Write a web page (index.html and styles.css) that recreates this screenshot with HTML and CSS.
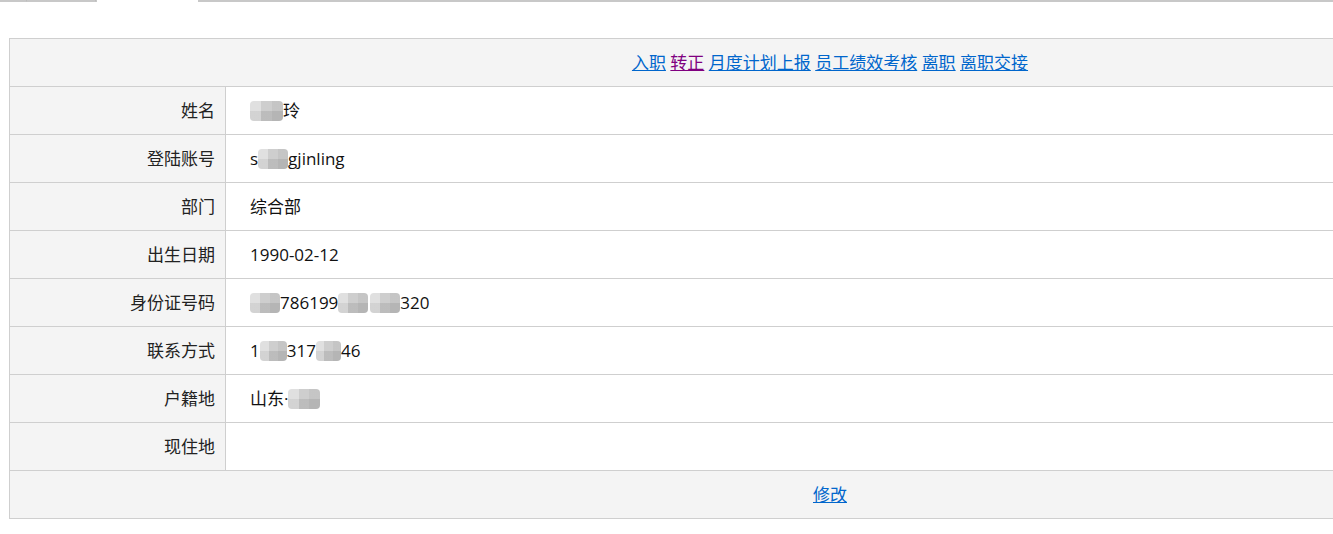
FILE: index.html
```html
<!DOCTYPE html>
<html lang="zh-CN">
<head>
<meta charset="utf-8">
<title>员工信息</title>
<link rel="stylesheet" href="styles.css">
</head>
<body>
<div class="tabs">
  <span class="tab tab-a"></span>
  <span class="tab tab-b"></span>
  <span class="tab tab-active"></span>
  <span class="tab tab-rest"></span>
</div>
<table class="info">
  <tr class="head">
    <td colspan="2">
      <a href="#">入职</a> <a href="#" class="visited">转正</a> <a href="#">月度计划上报</a> <a href="#">员工绩效考核</a> <a href="#">离职</a> <a href="#">离职交接</a>
    </td>
  </tr>
  <tr><th>姓名</th><td><span class="mask w33"></span>玲</td></tr>
  <tr><th>登陆账号</th><td>s<span class="mask w30"></span>gjinling</td></tr>
  <tr><th>部门</th><td>综合部</td></tr>
  <tr><th>出生日期</th><td>1990-02-12</td></tr>
  <tr><th>身份证号码</th><td><span class="mask w30"></span>786199<span class="mask w30"></span><span class="mask w30 gap"></span>320</td></tr>
  <tr><th>联系方式</th><td>1<span class="mask w27"></span>317<span class="mask w25"></span>46</td></tr>
  <tr><th>户籍地</th><td>山东·<span class="mask w32"></span></td></tr>
  <tr><th>现住地</th><td></td></tr>
  <tr class="foot"><td colspan="2"><a href="#">修改</a></td></tr>
</table>
</body>
</html>
```
FILE: styles.css
```css
html, body {
  margin: 0;
  padding: 0;
  background: #fff;
  font-family: "Open Sans", "Noto Sans CJK SC", sans-serif;
  font-size: 17px;
  color: #222;
}

.tabs {
  display: flex;
  height: 2px;
  width: 1333px;
}
.tab {
  display: block;
  height: 2px;
  box-sizing: border-box;
}
.tab-a {
  width: 27px;
  border-bottom: 2px solid #c8c8c8;
  border-right: 1px solid #b8b8b8;
}
.tab-b {
  width: 69px;
  border-bottom: 2px solid #c8c8c8;
  border-right: 1px solid #b8b8b8;
}
.tab-active {
  width: 102px;
  border-left: 1px solid #c8c8c8;
}
.tab-rest {
  flex: 1;
  border-bottom: 2px solid #c8c8c8;
  border-left: 1px solid #c8c8c8;
}

.info {
  margin: 36px 0 0 9px;
  width: 1642px;
  border-collapse: collapse;
  border: 1px solid #cfcfcf;
}
.info th,
.info td {
  border: 1px solid #cfcfcf;
  height: 47px;
  padding: 0;
  vertical-align: middle;
  line-height: 20px;
  white-space: nowrap;
}
.info th {
  width: 205px;
  background: #f4f4f4;
  font-weight: normal;
  text-align: right;
  padding-right: 10px;
  color: #222;
}
.info td {
  padding-left: 24px;
  color: #111;
}
.info .head td,
.info .foot td {
  background: #f4f4f4;
  text-align: center;
  padding: 0;
}
.info a {
  color: #0066cc;
  text-decoration: underline;
}
.info a.visited {
  color: #800080;
}

.mask {
  display: inline-block;
  height: 20px;
  vertical-align: -4px;
  border-radius: 4px;
  background:
    linear-gradient(90deg, rgba(255,255,255,0.25) 0 33%, rgba(0,0,0,0.04) 33% 66%, rgba(0,0,0,0.08) 66% 100%),
    linear-gradient(180deg, #d6d6d6 0 50%, #c4c4c4 50% 100%);
}
.w25 { width: 25px; }
.w27 { width: 27px; }
.w30 { width: 30px; }
.w32 { width: 32px; }
.w33 { width: 33px; }
.gap { margin-left: 2px; }
```
